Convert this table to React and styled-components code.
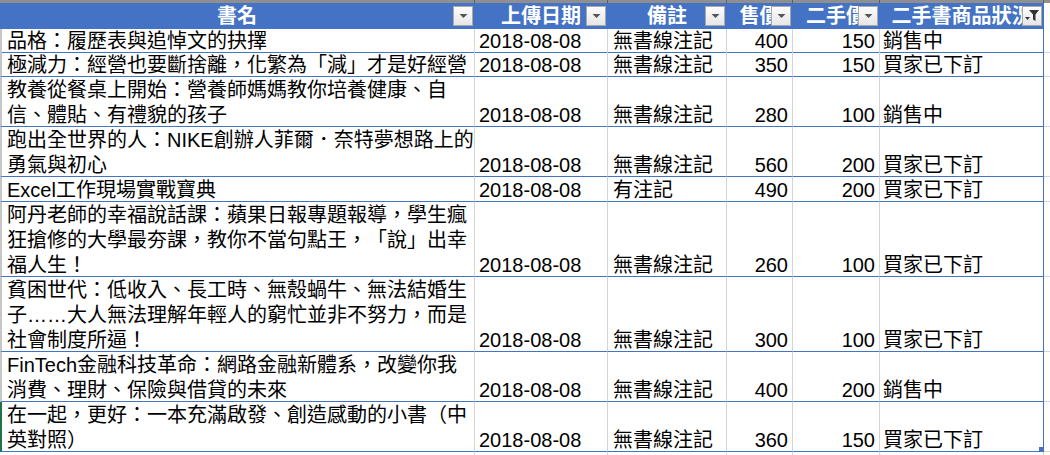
import React from 'react';
import styled, { createGlobalStyle } from 'styled-components';

const GlobalStyle = createGlobalStyle`
  html, body {
    margin: 0;
    padding: 0;
    background: #fff;
  }
  body {
    font-family: "Liberation Sans", "Noto Sans CJK TC", sans-serif;
    font-size: 20px;
    color: #000;
    text-spacing-trim: space-all;
  }
`;

const COLS = '475px 133px 119px 66px 87px 164px 1fr';

const Sheet = styled.div`
  width: 1050px;
  height: 455px;
  overflow: hidden;
  position: relative;
`;

const TopStrip = styled.div`
  display: grid;
  grid-template-columns: ${COLS};
  height: 3px;
  background: #8f8f8f;
`;

const StripCell = styled.div`
  border-right: 1px solid #5e5e5e;
`;

const HeaderRow = styled.div`
  display: grid;
  grid-template-columns: ${COLS};
  height: 26px;
`;

const HeaderCell = styled.div`
  position: relative;
  background: #4472c4;
  color: #fff;
  font-weight: bold;
  display: flex;
  align-items: center;
  justify-content: center;
  white-space: nowrap;
  overflow: hidden;
  border-right: 1px solid #4472c4;
  line-height: 26px;
`;

const FilterButton = styled.div`
  position: absolute;
  top: 3px;
  right: 1px;
  width: 20px;
  height: 20px;
  box-sizing: border-box;
  border: 1px solid #a9a9a9;
  background: linear-gradient(#fdfdfd, #e6e6e6);
  display: flex;
  align-items: center;
  justify-content: center;
`;

const Row = styled.div`
  display: grid;
  grid-template-columns: ${COLS};
  height: ${p => p.$h}px;
`;

const Cell = styled.div`
  box-sizing: border-box;
  border-bottom: 1px solid #4472c4;
  border-right: 1px solid ${p => (p.$edge ? '#4472c4' : '#d4d4d4')};
  display: flex;
  align-items: flex-end;
  justify-content: ${p => (p.$num ? 'flex-end' : 'flex-start')};
  padding: 0 ${p => (p.$num ? '4px' : '0')} 0 ${p => p.$pad || 0}px;
  white-space: nowrap;
`;

const TitleCell = styled(Cell)`
  border-left: 2px solid ${p => (p.$selected ? '#217346' : '#c6c6c6')};
  padding-left: 5px;
`;

const Filler = styled.div`
  border-bottom: 1px solid #d4d4d4;
`;

const Text = styled.span`
  line-height: 25px;
  margin-bottom: -2px;
`;

const StubRow = styled.div`
  display: grid;
  grid-template-columns: ${COLS};
  height: 3px;
`;

const Stub = styled.div`
  border-right: 1px solid #d4d4d4;
`;

const ResizeHandle = styled.div`
  position: absolute;
  left: 1039px;
  top: 447px;
  width: 5px;
  height: 5px;
  background: #4472c4;
`;

const Arrow = () => (
  <svg width="9" height="6" viewBox="0 0 9 6">
    <polygon points="0.5,1 8.5,1 4.5,5" fill="#555" />
  </svg>
);

const Funnel = () => (
  <svg width="16" height="14" viewBox="0 0 16 14">
    <polygon points="5,1 15,1 11.5,5.5 11.5,12 9,10.5 9,5.5" fill="#333" />
    <polygon points="1,8 6,8 3.5,11" fill="#333" />
  </svg>
);

const rows = [
  { title: ['品格：履歷表與追悼文的抉擇'], note: '無書線注記', price: 400, used: 150, status: '銷售中', h: 23 },
  { title: ['極減力：經營也要斷捨離，化繁為「減」才是好經營'], note: '無書線注記', price: 350, used: 150, status: '買家已下訂' },
  { title: ['教養從餐桌上開始：營養師媽媽教你培養健康、自', '信、體貼、有禮貌的孩子'], note: '無書線注記', price: 280, used: 100, status: '銷售中' },
  { title: ['跑出全世界的人：NIKE創辦人菲爾．奈特夢想路上的', '勇氣與初心'], note: '無書線注記', price: 560, used: 200, status: '買家已下訂' },
  { title: ['Excel工作現場實戰寶典'], note: '有注記', price: 490, used: 200, status: '買家已下訂' },
  { title: ['阿丹老師的幸福說話課：蘋果日報專題報導，學生瘋', '狂搶修的大學最夯課，教你不當句點王，「說」出幸', '福人生！'], note: '無書線注記', price: 260, used: 100, status: '買家已下訂' },
  { title: ['貧困世代：低收入、長工時、無殼蝸牛、無法結婚生', '子……大人無法理解年輕人的窮忙並非不努力，而是', '社會制度所逼！'], note: '無書線注記', price: 300, used: 100, status: '買家已下訂' },
  { title: ['FinTech金融科技革命：網路金融新體系，改變你我', '消費、理財、保險與借貸的未來'], note: '無書線注記', price: 400, used: 200, status: '銷售中' },
  { title: ['在一起，更好：一本充滿啟發、創造感動的小書（中', '英對照）'], note: '無書線注記', price: 360, used: 150, status: '買家已下訂', selected: true },
];

const headers = ['書名', '上傳日期', '備註', '售價', '二手價', '二手書商品狀況'];

export default function App() {
  return (
    <Sheet>
      <GlobalStyle />
      <TopStrip>
        {headers.map(h => <StripCell key={h} />)}
        <div />
      </TopStrip>
      <HeaderRow>
        {headers.map((h, i) => (
          <HeaderCell key={h}>
            {h}
            <FilterButton>{i === headers.length - 1 ? <Funnel /> : <Arrow />}</FilterButton>
          </HeaderCell>
        ))}
        <div />
      </HeaderRow>
      {rows.map((r, i) => (
        <Row key={i} $h={r.h || r.title.length * 25}>
          <TitleCell $selected={r.selected}>
            <Text>
              {r.title.map((line, j) => (
                <React.Fragment key={j}>
                  {j > 0 && <br />}
                  {line}
                </React.Fragment>
              ))}
            </Text>
          </TitleCell>
          <Cell $pad={4}><Text>2018-08-08</Text></Cell>
          <Cell $pad={5}><Text>{r.note}</Text></Cell>
          <Cell $num><Text>{r.price}</Text></Cell>
          <Cell $num><Text>{r.used}</Text></Cell>
          <Cell $pad={3} $edge><Text>{r.status}</Text></Cell>
          <Filler />
        </Row>
      ))}
      <StubRow>
        {headers.map(h => <Stub key={h} />)}
        <div />
      </StubRow>
      <ResizeHandle />
    </Sheet>
  );
}
